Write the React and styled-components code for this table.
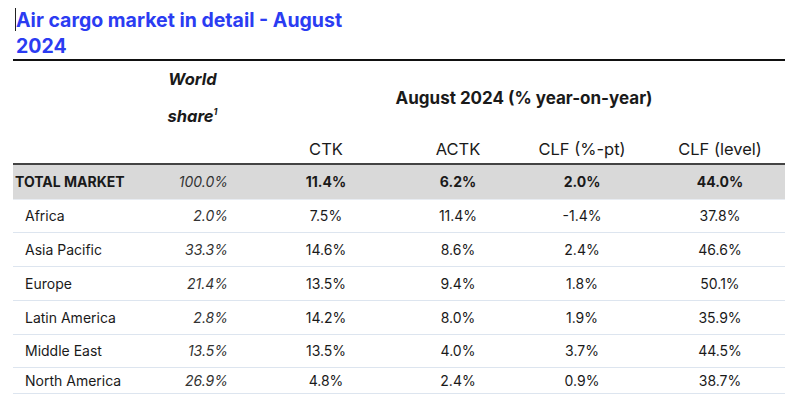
import React from "react";
import styled, { createGlobalStyle } from "styled-components";

const GlobalStyle = createGlobalStyle`
  html, body {
    margin: 0;
    padding: 0;
    background: #fff;
  }
  body {
    font-family: Inter, "Liberation Sans", Arial, sans-serif;
    color: #111;
  }
`;

const Page = styled.div`
  width: 796px;
  height: 410px;
  overflow: hidden;
  padding: 7px 11px 0 13px;
  box-sizing: border-box;
`;

const Title = styled.h2`
  position: relative;
  margin: 0 0 0 3px;
  width: 350px;
  font-size: 19.5px;
  line-height: 26px;
  font-weight: 700;
  color: #2b3cf2;

  .caret {
    position: absolute;
    left: -1px;
    top: 1px;
    width: 1px;
    height: 23px;
    background: #222;
  }
`;

const Table = styled.table`
  width: 772px;
  border-collapse: collapse;
  border-top: 2px solid #111;
  table-layout: fixed;

  col.label { width: 127px; }
  col.share { width: 105px; }
  col.ctk { width: 162px; }
  col.actk { width: 102px; }
  col.pt { width: 146px; }
  col.level { width: 130px; }
`;

const HeadRow = styled.tr`
  border-top: 1px solid #e4e4e4;
`;

const HeadCell = styled.th`
  padding: 0;
  font-weight: ${(p) => (p.$bold ? 700 : 400)};
  font-style: ${(p) => (p.$italic ? "italic" : "normal")};
  font-size: ${(p) => p.$size || "16.5px"};
  color: #1a1a1a;
  text-align: center;
  vertical-align: middle;
  line-height: ${(p) => p.$lh || "28px"};
  height: ${(p) => p.$h || "auto"};
  padding-left: ${(p) => p.$pl || "0"};

  sup {
    font-size: 9px;
    vertical-align: 7px;
    line-height: 0;
  }
`;

const ColRow = styled.tr`
  border-bottom: 2px solid #444;
`;

const Row = styled.tr`
  background: ${(p) => (p.$total ? "#d9d9d9" : "transparent")};
  border-bottom: 1px solid ${(p) => (p.$total ? "#e8ecf2" : "#dde5ef")};
  height: ${(p) => p.$h}px;
`;

const Cell = styled.td`
  padding: 0;
  font-size: 14px;
  font-weight: ${(p) => (p.$total ? 700 : 400)};
  color: #1a1a1a;
  text-align: center;
  vertical-align: middle;
`;

const LabelCell = styled(Cell)`
  text-align: left;
  padding-left: ${(p) => (p.$total ? "2px" : "12px")};
`;

const ShareCell = styled(Cell)`
  text-align: right;
  font-style: italic;
  padding-right: 17px;
  color: #333;
  font-weight: 400;
`;

const rows = [
  ["TOTAL MARKET", "100.0%", "11.4%", "6.2%", "2.0%", "44.0%"],
  ["Africa", "2.0%", "7.5%", "11.4%", "-1.4%", "37.8%"],
  ["Asia Pacific", "33.3%", "14.6%", "8.6%", "2.4%", "46.6%"],
  ["Europe", "21.4%", "13.5%", "9.4%", "1.8%", "50.1%"],
  ["Latin America", "2.8%", "14.2%", "8.0%", "1.9%", "35.9%"],
  ["Middle East", "13.5%", "13.5%", "4.0%", "3.7%", "44.5%"],
  ["North America", "26.9%", "4.8%", "2.4%", "0.9%", "38.7%"],
];

const heights = [35, 33, 34, 34, 34, 33, 26];

export default function App() {
  return (
    <Page>
      <GlobalStyle />
      <Title>
        <span className="caret" />
        Air cargo market in detail - August 2024
      </Title>
      <Table>
        <colgroup>
          <col className="label" />
          <col className="share" />
          <col className="ctk" />
          <col className="actk" />
          <col className="pt" />
          <col className="level" />
        </colgroup>
        <thead>
          <HeadRow>
            <HeadCell />
            <HeadCell $bold $italic $lh="37px" $h="73px">
              World
              <br />
              share<sup>1</sup>
            </HeadCell>
            <HeadCell $bold $size="17px" colSpan={4} $pl="18px">
              August 2024 (% year-on-year)
            </HeadCell>
          </HeadRow>
          <ColRow>
            <HeadCell />
            <HeadCell />
            <HeadCell>CTK</HeadCell>
            <HeadCell>ACTK</HeadCell>
            <HeadCell>CLF (%-pt)</HeadCell>
            <HeadCell>CLF (level)</HeadCell>
          </ColRow>
        </thead>
        <tbody>
          {rows.map((r, i) => {
            const total = i === 0;
            return (
              <Row key={r[0]} $total={total} $h={heights[i]}>
                <LabelCell $total={total}>{r[0]}</LabelCell>
                <ShareCell>{r[1]}</ShareCell>
                <Cell $total={total}>{r[2]}</Cell>
                <Cell $total={total}>{r[3]}</Cell>
                <Cell $total={total}>{r[4]}</Cell>
                <Cell $total={total}>{r[5]}</Cell>
              </Row>
            );
          })}
        </tbody>
      </Table>
    </Page>
  );
}
